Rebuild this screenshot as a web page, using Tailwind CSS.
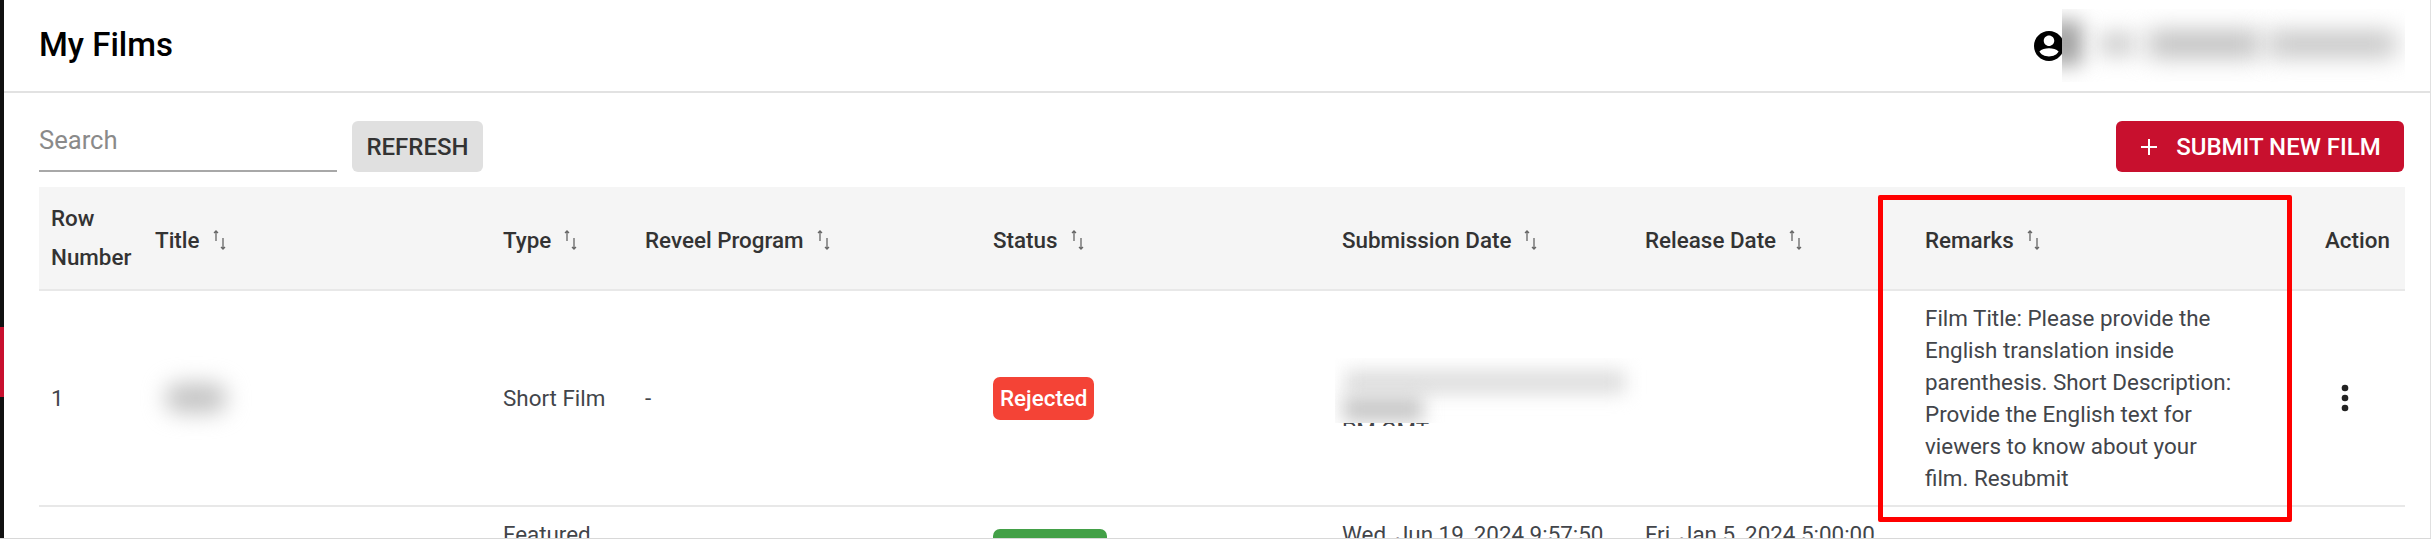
<!DOCTYPE html>
<html lang="en">
<head>
    <meta charset="UTF-8">
    <title>My Films</title>
    <script src="https://cdn.jsdelivr.net/npm/@tailwindcss/browser@4"></script>
</head>
<body class="bg-white font-['Roboto',sans-serif] overflow-hidden">
<div class="relative h-[539px] w-[2431px] overflow-hidden flex">
    <!-- Sidebar sliver -->
    <div class="w-[4px] h-full bg-[#111] shrink-0 flex flex-col">
        <div class="h-[327px]"></div>
        <div class="h-[70px] bg-[#c8102e]"></div>
    </div>

    <div class="flex-1 min-w-0 border-r border-[#e0e0e0]">
        <!-- Top bar -->
        <header class="h-[93px] border-b-2 border-[#e2e2e2] flex items-center justify-between pl-[35px] pr-[25px]">
            <h1 class="text-[33px] font-medium text-black -mt-[2px]">My Films</h1>
            <div class="flex items-center">
                <svg class="w-[36px] h-[36px] mr-[-5px]" viewBox="0 0 24 24" fill="#000"><path d="M12 2C6.48 2 2 6.48 2 12s4.48 10 10 10 10-4.48 10-10S17.52 2 12 2zm0 3c1.93 0 3.5 1.57 3.5 3.5S13.93 12 12 12s-3.5-1.57-3.5-3.5S10.07 5 12 5zm0 14c-2.9 0-5.4-1.3-6.4-3.3C6.9 14.2 9.6 13.5 12 13.5s5.1.7 6.4 2.2c-1 2-3.5 3.3-6.4 3.3z"/></svg>
                <div class="relative w-[343px] h-[73px] bg-white overflow-hidden">
                    <div class="absolute left-[-14px] top-[12px] w-[34px] h-[44px] bg-[#a0a0a0] blur-[10px]"></div>
                    <div class="absolute left-[38px] top-[24px] w-[34px] h-[22px] bg-[#c8c8c8] blur-[11px]"></div>
                    <div class="absolute left-[86px] top-[22px] w-[112px] h-[26px] bg-[#bcbcbc] blur-[12px]"></div>
                    <div class="absolute left-[206px] top-[23px] w-[128px] h-[24px] bg-[#c0c0c0] blur-[12px]"></div>
                </div>
            </div>
        </header>

        <!-- Toolbar -->
        <div class="pl-[35px] pr-[26px] pt-[28px]">
            <div class="flex items-center justify-between h-[51px]">
                <div class="flex items-center gap-[15px]">
                    <div class="w-[298px] h-[51px] border-b-2 border-[#a8a8a8] text-[25.6px] leading-[30px] pt-[4px] text-[#8a8a8a]">Search</div>
                    <button class="w-[131px] h-[51px] bg-[#e0e0e0] rounded-[6px] text-[24px] font-medium text-[#333]">REFRESH</button>
                </div>
                <button class="w-[288px] h-[51px] bg-[#c8102e] rounded-[6px] text-white text-[24px] font-medium flex items-center justify-center gap-[17px]">
                    <svg class="w-[20px] h-[20px]" viewBox="0 0 20 20" stroke="#fff" stroke-width="2" fill="none"><path d="M10 2v16M2 10h16"/></svg>
                    SUBMIT NEW FILM
                </button>
            </div>

            <!-- Films table -->
            <table class="mt-[15px] w-[2366px] table-fixed text-[22.4px] leading-[32px] text-[#42454a] border-collapse">
                <colgroup>
                    <col class="w-[104px]"><col class="w-[348px]"><col class="w-[142px]"><col class="w-[348px]"><col class="w-[349px]"><col class="w-[303px]"><col class="w-[280px]"><col class="w-[400px]"><col class="w-[92px]">
                </colgroup>
                <thead>
                    <tr class="h-[103px] bg-[#f5f5f5] border-b-2 border-[#e8e8e8] text-left text-[#333]">
                        <th class="px-[12px] font-medium leading-[39px]">Row Number</th>
                        <th class="px-[12px] pt-[3px] font-medium"><span class="inline-flex items-center gap-[12px]">Title <svg class="w-[16px] h-[20px]" viewBox="0 0 16 20" stroke="#666" stroke-width="1.3" fill="none"><path d="M4 11V1M2 3l2-2 2 2M11 8v11M9 17l2 2 2-2"/></svg></span></th>
                        <th class="px-[12px] pt-[3px] font-medium"><span class="inline-flex items-center gap-[12px]">Type <svg class="w-[16px] h-[20px]" viewBox="0 0 16 20" stroke="#666" stroke-width="1.3" fill="none"><path d="M4 11V1M2 3l2-2 2 2M11 8v11M9 17l2 2 2-2"/></svg></span></th>
                        <th class="px-[12px] pt-[3px] font-medium"><span class="inline-flex items-center gap-[12px]">Reveel Program <svg class="w-[16px] h-[20px]" viewBox="0 0 16 20" stroke="#666" stroke-width="1.3" fill="none"><path d="M4 11V1M2 3l2-2 2 2M11 8v11M9 17l2 2 2-2"/></svg></span></th>
                        <th class="px-[12px] pt-[3px] font-medium"><span class="inline-flex items-center gap-[12px]">Status <svg class="w-[16px] h-[20px]" viewBox="0 0 16 20" stroke="#666" stroke-width="1.3" fill="none"><path d="M4 11V1M2 3l2-2 2 2M11 8v11M9 17l2 2 2-2"/></svg></span></th>
                        <th class="px-[12px] pt-[3px] font-medium"><span class="inline-flex items-center gap-[12px]">Submission Date <svg class="w-[16px] h-[20px]" viewBox="0 0 16 20" stroke="#666" stroke-width="1.3" fill="none"><path d="M4 11V1M2 3l2-2 2 2M11 8v11M9 17l2 2 2-2"/></svg></span></th>
                        <th class="px-[12px] pt-[3px] font-medium"><span class="inline-flex items-center gap-[12px]">Release Date <svg class="w-[16px] h-[20px]" viewBox="0 0 16 20" stroke="#666" stroke-width="1.3" fill="none"><path d="M4 11V1M2 3l2-2 2 2M11 8v11M9 17l2 2 2-2"/></svg></span></th>
                        <th class="px-[12px] pt-[3px] font-medium"><span class="inline-flex items-center gap-[12px]">Remarks <svg class="w-[16px] h-[20px]" viewBox="0 0 16 20" stroke="#666" stroke-width="1.3" fill="none"><path d="M4 11V1M2 3l2-2 2 2M11 8v11M9 17l2 2 2-2"/></svg></span></th>
                        <th class="px-[12px] pt-[3px] font-medium">Action</th>
                    </tr>
                </thead>
                <tbody>
                    <tr class="h-[215px] border-b-2 border-[#e8e8e8]">
                        <td class="px-[12px]">1</td>
                        <td class="px-[12px]"><div class="w-[62px] h-[30px] ml-[10px] bg-[#c4c4c4] rounded-full blur-[11px]"></div></td>
                        <td class="px-[12px]">Short Film</td>
                        <td class="px-[12px]">-</td>
                        <td class="px-[12px]"><span class="inline-block h-[43px] px-[7px] rounded-[7px] bg-[#f44336] text-white font-medium leading-[43px]">Rejected</span></td>
                        <td class="px-[12px]">
                            <div class="relative h-[96px]">
                                <div class="h-[76px] overflow-hidden pt-[64px]">PM GMT</div>
                                <!-- Blurred-out submission date -->
                                <div class="absolute left-[-7px] top-[8px] w-[315px] h-[65px] bg-white overflow-hidden">
                                    <div class="absolute left-[10px] top-[12px] w-[280px] h-[24px] bg-[#dedede] blur-[9px]"></div>
                                    <div class="absolute left-[8px] top-[38px] w-[80px] h-[26px] bg-[#c8c8c8] blur-[9px]"></div>
                                </div>
                            </div>
                        </td>
                        <td class="px-[12px]"></td>
                        <td class="px-[12px] py-[11px]"><div class="w-[315px]">Film Title: Please provide the English translation inside parenthesis. Short Description: Provide the English text for viewers to know about your film. Resubmit</div></td>
                        <td class="px-[12px]">
                            <svg class="w-[40px] h-[40px]" viewBox="0 0 24 24" fill="#222"><circle cx="12" cy="6" r="2"/><circle cx="12" cy="12" r="2"/><circle cx="12" cy="18" r="2"/></svg>
                        </td>
                    </tr>
                    <tr class="align-top">
                        <td class="px-[12px] pt-[11px]"></td>
                        <td class="px-[12px] pt-[11px]"></td>
                        <td class="px-[12px] pt-[11px]">Featured Film</td>
                        <td class="px-[12px] pt-[11px]"></td>
                        <td class="px-[12px] pt-[22px]"><span class="inline-block w-[114px] h-[43px] rounded-[7px] bg-[#43a047]"></span></td>
                        <td class="px-[12px] pt-[11px]">Wed, Jun 19, 2024 9:57:50</td>
                        <td class="px-[12px] pt-[11px]">Fri, Jan 5, 2024 5:00:00</td>
                        <td class="px-[12px] pt-[11px]"></td>
                        <td class="px-[12px] pt-[33px]">
                            <svg class="w-[40px] h-[40px]" viewBox="0 0 24 24" fill="#222"><circle cx="12" cy="6" r="2"/><circle cx="12" cy="12" r="2"/><circle cx="12" cy="18" r="2"/></svg>
                        </td>
                    </tr>
                </tbody>
            </table>
        </div>
    </div>

    <!-- Red annotation box over the Remarks column -->
    <div class="absolute left-[1878px] top-[195px] w-[414px] h-[327px] border-[5px] border-[#ff0000] rounded-[2px]"></div>
    <!-- Bottom edge of the capture -->
    <div class="absolute left-0 bottom-0 w-full h-[1px] bg-[#d8d8d8]"></div>
</div>
</body>
</html>
